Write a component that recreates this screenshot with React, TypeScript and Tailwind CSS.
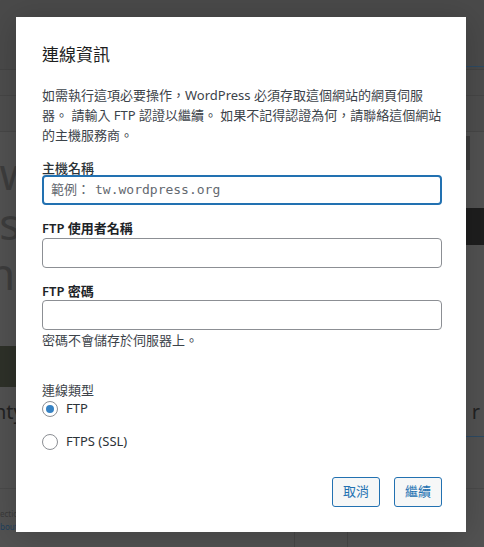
import React from "react";

const cjk = { fontFamily: '"Noto Sans", "Noto Sans CJK TC", sans-serif' };
const mono = { fontFamily: '"DejaVu Sans Mono", "Noto Sans CJK TC", monospace' };

function Radio({ checked, label }: { checked?: boolean; label: string }) {
  return (
    <label className="flex items-center gap-2 h-5">
      <span className="w-4 h-4 rounded-full border border-[#8c8f94] bg-white flex items-center justify-center">
        {checked && <span className="w-2 h-2 rounded-full bg-[#3582c4]" />}
      </span>
      <span className="text-[13px] text-[#2c3338]">{label}</span>
    </label>
  );
}

export default function App() {
  return (
    <div className="relative w-[484px] h-[547px] overflow-hidden bg-[#515151]" style={cjk}>
      {/* dimmed background page */}
      <div className="flex flex-col w-full h-full" aria-hidden="true">
        <div className="h-[70px] bg-[#4a4a4a] border-b border-[#444]" />
        <div className="h-[26px] bg-[#4d4d4d] border-b border-[#464646] flex justify-end">
          <div className="w-[20px] h-[1px] bg-[#2d4a63] mt-[-4px]" />
        </div>
        <div className="h-[36px] bg-[#4e4e4e] border-b border-[#474747]" />
        <div className="relative flex-1 bg-[#525252]">
          <div className="flex justify-between h-[214px]">
            <div className="text-[44px] leading-[50px] text-[#3d3d3d] mt-[16px] ml-[-12px]">
              <div>&nbsp;w</div>
              <div>is</div>
              <div>nc</div>
            </div>
            <div className="flex flex-col items-end mt-[4px]">
              <div className="w-[14px] h-[34px] bg-[#3c3c3c] mr-[14px]" />
              <div className="w-[20px] h-[37px] bg-[#1e1e1e] mt-[38px]" />
            </div>
          </div>
          <div className="w-[16px] h-[41px] bg-[#2e3129]" />
          <div className="flex justify-between items-center h-[49px] text-[20px] text-[#222]">
            <span className="ml-[-6px]">nty</span>
            <span className="mr-[4px]">r</span>
          </div>
          <div className="flex justify-end">
            <div className="w-[20px] h-[1px] bg-[#2d4a63]" />
          </div>
          <div className="h-[52px] border-b border-[#4a4a4a]" />
          <div className="text-[8px] text-[#3a3a3a] leading-[13px] mt-[18px]">
            <div>ection</div>
            <div className="text-[#1f3f5c]">bout</div>
          </div>
          <div className="absolute left-[294px] bottom-0 w-[1px] h-[20px] bg-[#474747]" />
          <div className="absolute left-[347px] bottom-0 w-[1px] h-[20px] bg-[#474747]" />
        </div>
      </div>

      {/* modal */}
      <div className="absolute left-[16px] top-[17px] w-[450px] h-[515px] bg-white shadow-[0_3px_30px_rgba(0,0,0,0.2)] pl-[26px] pr-[24px] pt-[26px] flex flex-col">
        <h1 className="text-[17px] leading-[24px] text-[#1e1e1e] font-normal">連線資訊</h1>
        <p className="mt-[18px] text-[13px] leading-[20px] text-[#3c434a]">
          如需執行這項必要操作，WordPress 必須存取這個網站的網頁伺服器。 請輸入 FTP 認證以繼續。 如果不記得認證為何，請聯絡這個網站的主機服務商。
        </p>

        <label className="mt-[16px] text-[13px] leading-[14px] font-medium text-[#2c3338]">主機名稱</label>
        <div className="h-[30px] w-[400px] rounded-[4px] border-2 border-[#2271b1] flex items-center pl-[7px]">
          <span className="text-[13px] text-[#646970]" style={mono}>範例：</span>
          <span className="ml-[5px] text-[13px] text-[#646970]" style={mono}>tw.wordpress.org</span>
        </div>

        <label className="mt-[16px] text-[13px] leading-[14px] font-semibold text-[#1d2327]">FTP 使用者名稱</label>
        <div className="mt-[3px] h-[30px] w-[400px] rounded-[4px] border border-[#8c8f94]" />

        <label className="mt-[16px] text-[13px] leading-[14px] font-semibold text-[#1d2327]">FTP 密碼</label>
        <div className="mt-[2px] h-[30px] w-[400px] rounded-[4px] border border-[#8c8f94]" />
        <p className="mt-[3px] text-[13px] leading-[14px] text-[#3c434a]">密碼不會儲存於伺服器上。</p>

        <p className="mt-[36px] text-[13px] leading-[14px] text-[#3c434a]">連線類型</p>
        <div className="mt-[2px] flex flex-col gap-[13px]">
          <Radio checked label="FTP" />
          <Radio label="FTPS (SSL)" />
        </div>

        <div className="mt-[25px] flex justify-end gap-[14px]">
          <button className="w-[48px] h-[30px] rounded-[3px] border border-[#2271b1] bg-[#f6f7f7] text-[13px] text-[#2271b1]">取消</button>
          <button className="w-[48px] h-[30px] rounded-[3px] border border-[#2271b1] bg-[#f6f7f7] text-[13px] text-[#2271b1]">繼續</button>
        </div>
      </div>
    </div>
  );
}
